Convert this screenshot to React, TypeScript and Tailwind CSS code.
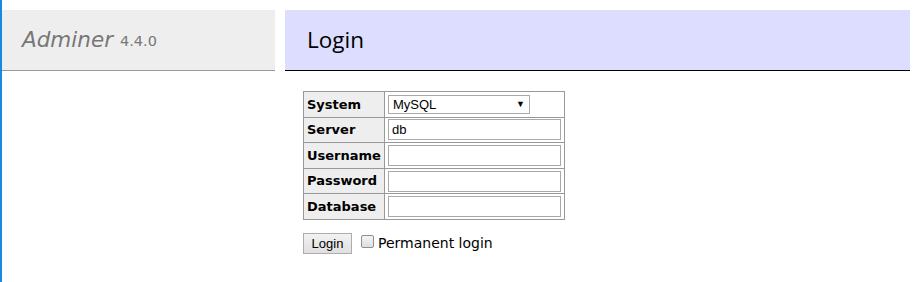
import React from 'react';

const fields = [
  { label: 'Server', value: 'db' },
  { label: 'Username', value: '' },
  { label: 'Password', value: '' },
  { label: 'Database', value: '' },
];

const thClass =
  "h-[25.6px] border border-[#999] bg-[#eee] px-[3px] py-0 text-left align-middle text-[13px] font-bold font-['DejaVu_Sans',Verdana,sans-serif] text-black";
const tdClass = 'h-[25.6px] border border-[#999] px-[3px] py-0 align-middle';

export default function App() {
  return (
    <div className="flex h-[282px] w-[918px] overflow-hidden border-l-2 border-[#1a87e0] bg-white pt-[10px]">
      {/* menu */}
      <div className="w-[273px] shrink-0">
        <h1 className="flex h-[61px] items-center border-b border-[#999] bg-[#eee] pl-[20px] font-['DejaVu_Sans',Verdana,sans-serif] font-normal text-[#777]">
          <span className="text-[21.5px] italic">Adminer</span>
          <span className="ml-[7px] mt-[4px] text-[14.5px]">4.4.0</span>
        </h1>
      </div>

      {/* content */}
      <div className="ml-[10px] mr-[8px] flex-1">
        <h2 className="flex h-[61px] items-center border-b border-black bg-[#ddf] pl-[22px] font-['Open_Sans','Noto_Sans',sans-serif] text-[22.5px] font-normal text-black">
          Login
        </h2>

        <div className="ml-[18px] mt-[20px]">
          <table className="border-collapse border border-[#999]">
            <tbody>
              <tr>
                <th className={thClass}>System</th>
                <td className={tdClass}>
                  <div className="relative w-[142px]">
                    <select
                      defaultValue="server"
                      className="block h-[19px] w-[142px] appearance-none border border-[#a9a9a9] bg-white pl-[4px] font-['Liberation_Sans',Arial,sans-serif] text-[13px] leading-[17px] text-black outline-none"
                    >
                      <option value="server">MySQL</option>
                      <option value="sqlite">SQLite 3</option>
                      <option value="pgsql">PostgreSQL</option>
                    </select>
                    <span className="pointer-events-none absolute right-[5px] top-[4px] text-[9px] leading-[10px] text-black">▼</span>
                  </div>
                </td>
              </tr>
              {fields.map((f) => (
                <tr key={f.label}>
                  <th className={thClass}>{f.label}</th>
                  <td className={tdClass}>
                    <input
                      type={f.label === 'Password' ? 'password' : 'text'}
                      defaultValue={f.value}
                      className="block h-[21px] w-[173px] border border-[#a9a9a9] bg-white px-[3px] font-['Liberation_Sans',Arial,sans-serif] text-[13px] text-black outline-none"
                    />
                  </td>
                </tr>
              ))}
            </tbody>
          </table>

          <div className="mt-[13px] flex items-center">
            <button className="h-[21px] w-[49px] border border-[#adadad] bg-gradient-to-b from-[#f2f2f2] to-[#e0e0e0] font-['Liberation_Sans',Arial,sans-serif] text-[13px] text-black">
              Login
            </button>
            <label className="ml-[9px] flex items-center font-['DejaVu_Sans',Verdana,sans-serif] text-[14px] text-black">
              <span className="mb-[3px] h-[13px] w-[13px] rounded-[2px] border border-[#8f8f8f] bg-gradient-to-b from-[#f4f4f4] to-[#dedede]" />
              <span className="ml-[4px]">Permanent login</span>
            </label>
          </div>
        </div>
      </div>
    </div>
  );
}
